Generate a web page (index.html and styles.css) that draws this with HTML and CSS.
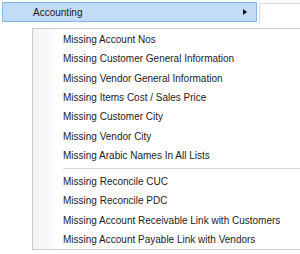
FILE: index.html
```html
<!DOCTYPE html>
<html lang="en">
<head>
    <meta charset="UTF-8">
    <title>Accounting menu</title>
    <link rel="stylesheet" href="styles.css">
</head>
<body>

<div class="topbar">
    <div class="current">
        <span>Accounting</span>
        <span class="arrow"></span>
    </div>
    <div class="rest"></div>
</div>

<div class="submenu">
    <div class="gutter"></div>
    <ul class="items">
        <li>Missing Account Nos</li>
        <li>Missing Customer General Information</li>
        <li>Missing Vendor General Information</li>
        <li>Missing Items Cost / Sales Price</li>
        <li>Missing Customer City</li>
        <li>Missing Vendor City</li>
        <li>Missing Arabic Names In All Lists</li>
        <li class="sep"></li>
        <li>Missing Reconcile CUC</li>
        <li>Missing Reconcile PDC</li>
        <li>Missing Account Receivable Link with Customers</li>
        <li>Missing Account Payable Link with Vendors</li>
    </ul>
</div>

</body>
</html>
```

FILE: styles.css
```css
body { margin: 0; background: #fff; font-family: "Liberation Sans", Arial, sans-serif; font-size: 10px; color: #1b1b1b; overflow: hidden; }

.topbar { display: flex; padding-top: 2px; height: 22px; }
.current {
    width: 255px;
    margin-left: 2px;
    height: 20px;
    box-sizing: border-box;
    border: 1px solid #86b6e8;
    background: #c3dcf6;
    display: flex;
    align-items: center;
    justify-content: space-between;
    padding: 0 9px 0 30px;
}
.arrow {
    width: 0;
    height: 0;
    border-top: 3.5px solid transparent;
    border-bottom: 3.5px solid transparent;
    border-left: 4px solid #111;
}
.rest { flex: 1; margin-top: 1px; margin-left: 2px; border-top: 1px solid #dcdcdc; border-left: 1px solid #dcdcdc; }

.submenu {
    display: flex;
    margin: 4px 0 0 32px;
    border: 1px solid #cdcdcd;
    border-right: none;
    background: #fff;
}
.gutter { width: 22px; background: linear-gradient(to right, #f3f3f3, #fbfbfb); }
.items { list-style: none; margin: 0; padding: 1px 0 0 8px; flex: 1; }
.items li { height: 19.33px; line-height: 19.33px; white-space: nowrap; }
.items li.sep { height: 6.67px; display: flex; align-items: center; }
.items li.sep::after { content: ""; flex: 1; border-top: 1px solid #d7d7d7; }
```
